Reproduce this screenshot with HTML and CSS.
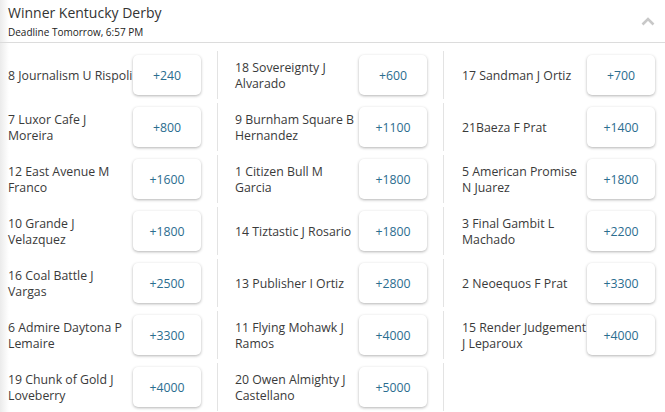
FILE: index.html
```html
<!DOCTYPE html>
<html lang="en">
<head>
    <meta charset="UTF-8">
    <meta name="viewport" content="width=device-width, initial-scale=1.0">
    <title>Winner Kentucky Derby</title>
    <link rel="stylesheet" href="styles.css">
</head>
<body>
    <div class="market">
        <div class="market-header">
            <div>
                <h2>Winner Kentucky Derby</h2>
                <div class="deadline">Deadline Tomorrow, 6:57 PM</div>
            </div>
            <svg class="chevron" width="14" height="9" viewBox="0 0 14 9">
                <path d="M1.5 7.5 L7 2 L12.5 7.5" fill="none" stroke="#c8c8c8" stroke-width="2.6"/>
            </svg>
        </div>

        <div class="runners">
            <div class="runner"><span class="name">8 Journalism U Rispoli</span><button class="odds">+240</button></div>
            <div class="runner"><span class="name">18 Sovereignty J Alvarado</span><button class="odds">+600</button></div>
            <div class="runner"><span class="name">17 Sandman J Ortiz</span><button class="odds">+700</button></div>

            <div class="runner"><span class="name">7 Luxor Cafe J Moreira</span><button class="odds">+800</button></div>
            <div class="runner"><span class="name">9 Burnham Square B Hernandez</span><button class="odds">+1100</button></div>
            <div class="runner"><span class="name">21Baeza F Prat</span><button class="odds">+1400</button></div>

            <div class="runner"><span class="name">12 East Avenue M Franco</span><button class="odds">+1600</button></div>
            <div class="runner"><span class="name">1 Citizen Bull M Garcia</span><button class="odds">+1800</button></div>
            <div class="runner"><span class="name">5 American Promise N Juarez</span><button class="odds">+1800</button></div>

            <div class="runner"><span class="name">10 Grande J Velazquez</span><button class="odds">+1800</button></div>
            <div class="runner"><span class="name">14 Tiztastic J Rosario</span><button class="odds">+1800</button></div>
            <div class="runner"><span class="name">3 Final Gambit L Machado</span><button class="odds">+2200</button></div>

            <div class="runner"><span class="name">16 Coal Battle J Vargas</span><button class="odds">+2500</button></div>
            <div class="runner"><span class="name">13 Publisher I Ortiz</span><button class="odds">+2800</button></div>
            <div class="runner"><span class="name">2 Neoequos F Prat</span><button class="odds">+3300</button></div>

            <div class="runner"><span class="name">6 Admire Daytona P Lemaire</span><button class="odds">+3300</button></div>
            <div class="runner"><span class="name">11 Flying Mohawk J Ramos</span><button class="odds">+4000</button></div>
            <div class="runner"><span class="name">15 Render Judgement J Leparoux</span><button class="odds">+4000</button></div>

            <div class="runner"><span class="name">19 Chunk of Gold J Loveberry</span><button class="odds">+4000</button></div>
            <div class="runner"><span class="name">20 Owen Almighty J Castellano</span><button class="odds">+5000</button></div>
            <div class="runner empty"></div>
        </div>
    </div>
</body>
</html>
```

FILE: styles.css
```css
body {
    margin: 0;
    font-family: 'Open Sans', 'Liberation Sans', sans-serif;
    color: #333;
    background: #fff;
}

.market {
    width: 665px;
    height: 412px;
    overflow: hidden;
    background: linear-gradient(to right, #ebebeb 0, #fff 9px); /* soft edge on the left */
}

.market-header {
    display: flex;
    justify-content: space-between;
    align-items: flex-start;
    height: 43px;
    box-sizing: border-box;
    padding: 3px 10px 0 8px;
    border-bottom: 1px solid #dcdcdc;
}

.market-header h2 {
    margin: 0;
    font-size: 14px;
    font-weight: normal;
    line-height: 20px;
    color: #333;
}

.deadline {
    margin-top: 3px;
    font-size: 10px;
    line-height: 13px;
    color: #222;
}

.chevron {
    margin-top: 14px;
}

.runners {
    display: grid;
    grid-template-columns: 217px 226px 1fr;
    row-gap: 4px;
    padding-top: 8px;
}

.runner {
    display: flex;
    align-items: center;
    height: 48px;
    padding: 0 16px 0 17px;
    border-left: 1px solid #e3e3e3;
}

.runner:nth-child(3n+1) {
    padding-left: 8px;
    border-left: none;
}

.runner:nth-child(3n) {
    padding-left: 18px;
    padding-right: 10px;
}

.name {
    flex: 1;
    padding-top: 2px;
    font-size: 12.3px;
    line-height: 16px;
    color: #3a3a3a;
}

.odds {
    flex: none;
    width: 68px;
    height: 40px;
    border: none;
    border-radius: 5px;
    background: #fff;
    box-shadow: 0 1px 3px rgba(0, 0, 0, 0.3);
    font-family: inherit;
    font-size: 12.3px;
    color: #2b6d8f;
    cursor: pointer;
}
```
